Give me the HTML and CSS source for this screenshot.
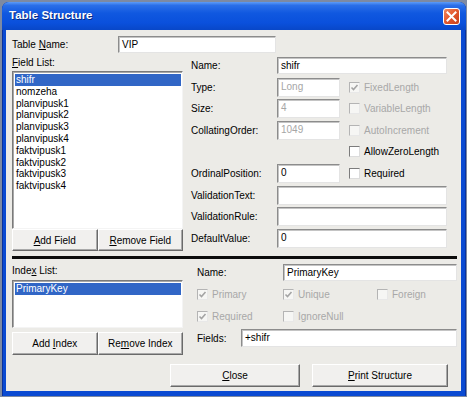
FILE: index.html
```html
<!DOCTYPE html>
<html lang="en">
<head>
    <meta charset="UTF-8">
    <title>Table Structure</title>
    <link rel="stylesheet" href="styles.css">
</head>
<body>
    <div class="window">
        <div class="titlebar">
            <span class="title">Table Structure</span>
            <span class="close-btn">
                <svg width="11" height="11" viewBox="0 0 11 11"><path d="M1.5 1.5 L9.5 9.5 M9.5 1.5 L1.5 9.5" stroke="#fff" stroke-width="2" stroke-linecap="square"/></svg>
            </span>
        </div>

        <div class="client">
            <div class="tn-row">
                <span class="tn-label">Table <u>N</u>ame:</span>
                <div class="input tn-input">VIP</div>
            </div>

            <div class="fields">
                <div class="left-col">
                    <div class="list-label"><u>F</u>ield List:</div>
                    <div class="listbox field-list">
                        <div class="item selected">shifr</div>
                        <div class="item">nomzeha</div>
                        <div class="item">planvipusk1</div>
                        <div class="item">planvipusk2</div>
                        <div class="item">planvipusk3</div>
                        <div class="item">planvipusk4</div>
                        <div class="item">faktvipusk1</div>
                        <div class="item">faktvipusk2</div>
                        <div class="item">faktvipusk3</div>
                        <div class="item">faktvipusk4</div>
                    </div>
                    <div class="btn-pair">
                        <div class="btn"><span><u>A</u>dd Field</span></div>
                        <div class="btn"><span><u>R</u>emove Field</span></div>
                    </div>
                </div>

                <div class="props">
                    <span class="plabel">Name:</span>
                    <div class="input long">shifr</div>

                    <span class="plabel">Type:</span>
                    <div class="input short disabled">Long</div>
                    <span class="check disabled"><span class="box checked"><svg width="9" height="9" viewBox="0 0 9 9"><path d="M1.5 4.5 L3.5 6.5 L7.5 2" fill="none" stroke-width="1.6"/></svg></span>FixedLength</span>

                    <span class="plabel">Size:</span>
                    <div class="input short disabled">4</div>
                    <span class="check disabled"><span class="box"></span>VariableLength</span>

                    <span class="plabel">CollatingOrder:</span>
                    <div class="input short disabled">1049</div>
                    <span class="check disabled"><span class="box"></span>AutoIncrement</span>

                    <span class="plabel"></span>
                    <span></span>
                    <span class="check"><span class="box"></span>AllowZeroLength</span>

                    <span class="plabel">OrdinalPosition:</span>
                    <div class="input short">0</div>
                    <span class="check"><span class="box"></span>Required</span>

                    <span class="plabel">ValidationText:</span>
                    <div class="input long"></div>

                    <span class="plabel">ValidationRule:</span>
                    <div class="input long"></div>

                    <span class="plabel">DefaultValue:</span>
                    <div class="input long">0</div>
                </div>
            </div>

            <div class="separator"></div>

            <div class="indexes">
                <div class="left-col">
                    <div class="list-label idx-label">Inde<u>x</u> List:</div>
                    <div class="listbox index-list">
                        <div class="item selected">PrimaryKey</div>
                    </div>
                    <div class="btn-pair idx-btns">
                        <div class="btn"><span>Add <u>I</u>ndex</span></div>
                        <div class="btn"><span>Re<u>m</u>ove Index</span></div>
                    </div>
                </div>

                <div class="idx-props">
                    <div class="irow">
                        <span class="ilabel">Name:</span>
                        <div class="input iname">PrimaryKey</div>
                    </div>
                    <div class="irow cb-row">
                        <span class="check disabled w86"><span class="box checked"><svg width="9" height="9" viewBox="0 0 9 9"><path d="M1.5 4.5 L3.5 6.5 L7.5 2" fill="none" stroke-width="1.6"/></svg></span>Primary</span>
                        <span class="check disabled w94"><span class="box checked"><svg width="9" height="9" viewBox="0 0 9 9"><path d="M1.5 4.5 L3.5 6.5 L7.5 2" fill="none" stroke-width="1.6"/></svg></span>Unique</span>
                        <span class="check disabled"><span class="box"></span>Foreign</span>
                    </div>
                    <div class="irow cb-row">
                        <span class="check disabled w86"><span class="box checked"><svg width="9" height="9" viewBox="0 0 9 9"><path d="M1.5 4.5 L3.5 6.5 L7.5 2" fill="none" stroke-width="1.6"/></svg></span>Required</span>
                        <span class="check disabled w94"><span class="box"></span>IgnoreNull</span>
                    </div>
                    <div class="irow">
                        <span class="ilabel flabel">Fields:</span>
                        <div class="input ifields">+shifr</div>
                    </div>
                </div>
            </div>

            <div class="footer">
                <div class="btn close"><span><u>C</u>lose</span></div>
                <div class="btn print"><span><u>P</u>rint Structure</span></div>
            </div>
        </div>
    </div>
</body>
</html>
```

FILE: styles.css
```css
body {
    margin: 0;
    width: 467px;
    height: 397px;
    overflow: hidden;
    background: #7d8aa3;
    font-family: "Liberation Sans", Arial, sans-serif;
    font-size: 10px;
    color: #000;
}
u {
    text-decoration: underline;
    text-underline-offset: 1px;
}
.window {
    margin: 2px 0 0 2px;
    width: 464px;
    height: 394px;
    background: #0a4ad2;
    border-radius: 7px 7px 0 0;
    display: flex;
    flex-direction: column;
    box-shadow: inset 1px 0 #0831a0, inset -1px 0 #0831a0;
}
.titlebar {
    height: 28px;
    display: flex;
    align-items: center;
    justify-content: space-between;
    padding: 0 6px 2px 7px;
    box-sizing: border-box;
    border-radius: 7px 7px 0 0;
    background: linear-gradient(#5d9cf8 0, #2b6fe8 12%, #1058e0 40%, #0a50dc 75%, #0847c8 100%);
}
.title {
    color: #fff;
    font-weight: bold;
    font-size: 11.5px;
    text-shadow: 1px 1px #0a2a80;
}
.close-btn {
    width: 17px;
    height: 17px;
    box-sizing: border-box;
    border: 1px solid #fff;
    border-radius: 3px;
    background: linear-gradient(135deg, #f08a60 0%, #e2562c 50%, #c8401c 100%);
    display: flex;
    align-items: center;
    justify-content: center;
    margin-top: 2px;
}
.client {
    flex: 1;
    margin: 0 5px 5px 4px;
    background: #ecebe7;
    padding: 6px 0 0 6px;
}
.input {
    background: #fff;
    border: 1px solid;
    border-color: #8c8c8c #e4e4e4 #e4e4e4 #8c8c8c;
    box-shadow: inset 1px 1px #c4c4c4;
    box-sizing: border-box;
    padding: 2px 0 0 3px;
    line-height: 12px;
    white-space: nowrap;
}
.input.disabled {
    color: #a6a6a6;
}
.tn-row {
    display: flex;
    align-items: center;
    height: 17px;
}
.tn-label {
    width: 106px;
}
.tn-input {
    width: 158px;
    height: 17px;
}
.fields {
    display: flex;
    gap: 8px;
    margin-top: 3px;
}
.left-col {
    width: 171px;
    display: flex;
    flex-direction: column;
}
.list-label {
    height: 15px;
    line-height: 13px;
}
.listbox {
    background: #fff;
    border: 1px solid;
    border-color: #7a7a7a #f4f4f4 #f4f4f4 #7a7a7a;
    box-shadow: inset 1px 1px #a8a8a8;
    box-sizing: border-box;
    padding: 2px 1px 0 2px;
}
.field-list {
    height: 158px;
}
.item {
    height: 11.8px;
    line-height: 11.8px;
    padding-left: 1px;
}
.item.selected {
    background: #3166c6;
    color: #fff;
}
.btn-pair {
    display: flex;
    height: 22px;
}
.btn-pair .btn {
    flex: 1;
}
.btn {
    background: #f1f0ee;
    border: 1px solid;
    border-color: #fff #6a6a6a #6a6a6a #fff;
    box-shadow: inset -1px -1px #a9a9a9;
    box-sizing: border-box;
    display: flex;
    align-items: center;
    justify-content: center;
    white-space: nowrap;
}
.props {
    display: grid;
    grid-template-columns: 86px 63px 107px;
    grid-auto-rows: 19px;
    row-gap: 2.6px;
    align-items: center;
}
.input.long {
    grid-column: 2 / 4;
    height: 19px;
}
.props .input:first-of-type {
    height: 17px;
}
.input.short {
    height: 19px;
}
.check {
    display: flex;
    align-items: center;
    gap: 4px;
    padding-left: 9px;
    white-space: nowrap;
}
.check.disabled {
    color: #a8a8a8;
}
.box {
    width: 11px;
    height: 11px;
    box-sizing: border-box;
    background: #fff;
    border: 1px solid;
    border-color: #7c7c7c #dcdcdc #dcdcdc #7c7c7c;
    display: flex;
    align-items: center;
    justify-content: center;
}
.box svg path {
    stroke: #333;
}
.check.disabled .box {
    background: #f6f6f4;
    border-color: #b4b4b4 #e8e8e8 #e8e8e8 #b4b4b4;
}
.check.disabled .box svg path {
    stroke: #a4a4a4;
}
.separator {
    margin-top: 5px;
    width: 445px;
    height: 3px;
    background: #0c0c0c;
}
.indexes {
    display: flex;
    gap: 14px;
    margin-top: 5px;
}
.idx-label {
    height: 16px;
}
.index-list {
    height: 48px;
}
.idx-btns {
    margin-top: 4px;
    height: 23px;
}
.idx-props {
    width: 260px;
    display: flex;
    flex-direction: column;
    gap: 4px;
}
.irow {
    display: flex;
    align-items: center;
}
.ilabel {
    width: 86px;
}
.iname {
    width: 174px;
    height: 17px;
}
.cb-row {
    height: 18px;
}
.cb-row .check {
    padding-left: 0;
}
.w86 {
    width: 86px;
}
.w94 {
    width: 94px;
}
.flabel {
    width: 44px;
}
.ifields {
    width: 216px;
    height: 18px;
}
.footer {
    display: flex;
    justify-content: flex-end;
    gap: 12px;
    margin-top: 9px;
    padding-right: 13px;
}
.footer .btn {
    height: 23px;
}
.close {
    width: 130px;
}
.print {
    width: 136px;
}
```
